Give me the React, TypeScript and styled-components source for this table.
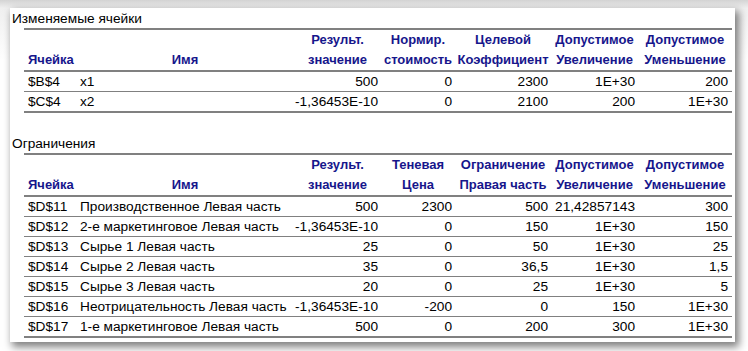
import React from "react";
import styled, { createGlobalStyle } from "styled-components";

const Global = createGlobalStyle`
  html, body { margin: 0; padding: 0; background: #ffffff; }
  body { font-family: "Liberation Sans", Arial, sans-serif; }
`;

const Canvas = styled.div`
  width: 748px;
  height: 351px;
  padding: 8px 0 0 10px;
  box-sizing: border-box;
  overflow: hidden;
  background: linear-gradient(180deg, #d4d4d4 0px, #f0f0f0 8px, #ffffff 60px);
`;

const Page = styled.div`
  width: 725px;
  height: 334px;
  background: #ffffff;
  box-shadow: 3px 4px 8px 1px rgba(0, 0, 0, 0.5);
  display: flex;
  flex-direction: column;
  font-size: 13.7px;
  color: #000;
`;

const Title = styled.div<{ $gap?: boolean }>`
  height: 20px;
  line-height: 20px;
  padding-left: 2px;
  padding-top: 1px;
  box-sizing: border-box;
  margin-top: ${(p) => (p.$gap ? "20px" : "0")};
  white-space: nowrap;
`;

const Table = styled.div`
  margin-left: 14px;
  width: 708px;
  border-top: 2px solid #808080;
`;

const cols = "52px 218px 87px 74px 96px 87px 94px";

const HeadRow = styled.div`
  display: grid;
  grid-template-columns: ${cols};
  height: 40px;
  border-bottom: 2px solid #808080;
`;

const HeadCell = styled.div<{ $align: "left" | "center" }>`
  display: flex;
  flex-direction: column;
  justify-content: flex-end;
  text-align: ${(p) => p.$align};
  padding-left: ${(p) => (p.$align === "left" ? "4px" : "0")};
  font-weight: bold;
  font-size: 13px;
  color: #16168c;
  line-height: 20px;
  white-space: nowrap;
`;

const Row = styled.div<{ $last?: boolean }>`
  display: grid;
  grid-template-columns: ${cols};
  height: 19px;
  line-height: 19px;
  border-bottom: ${(p) => (p.$last ? "2px" : "1px")} solid #808080;
`;

const Cell = styled.div<{ $num?: boolean; $pr?: number }>`
  white-space: nowrap;
  text-align: ${(p) => (p.$num ? "right" : "left")};
  padding-left: ${(p) => (p.$num ? "0" : "4px")};
  padding-right: ${(p) => (p.$num ? `${p.$pr ?? 3}px` : "0")};
`;

type Data = string[];

const changing: Data[] = [
  ["$B$4", "x1", "500", "0", "2300", "1E+30", "200"],
  ["$C$4", "x2", "-1,36453E-10", "0", "2100", "200", "1E+30"],
];

const constraints: Data[] = [
  ["$D$11", "Производственное Левая часть", "500", "2300", "500", "21,42857143", "300"],
  ["$D$12", "2-е маркетинговое Левая часть", "-1,36453E-10", "0", "150", "1E+30", "150"],
  ["$D$13", "Сырье 1 Левая часть", "25", "0", "50", "1E+30", "25"],
  ["$D$14", "Сырье 2 Левая часть", "35", "0", "36,5", "1E+30", "1,5"],
  ["$D$15", "Сырье 3 Левая часть", "20", "0", "25", "1E+30", "5"],
  ["$D$16", "Неотрицательность Левая часть", "-1,36453E-10", "-200", "0", "150", "1E+30"],
  ["$D$17", "1-е маркетинговое Левая часть", "500", "0", "200", "300", "1E+30"],
];

const Header: React.FC<{ heads: [string, string][] }> = ({ heads }) => (
  <HeadRow>
    <HeadCell $align="left">Ячейка</HeadCell>
    <HeadCell $align="center">Имя</HeadCell>
    {heads.map(([a, b], i) => (
      <HeadCell key={i} $align="center">
        <span>{a}</span>
        <span>{b}</span>
      </HeadCell>
    ))}
  </HeadRow>
);

const Body: React.FC<{ rows: Data[] }> = ({ rows }) => (
  <>
    {rows.map((r, i) => (
      <Row key={i} $last={i === rows.length - 1}>
        <Cell>{r[0]}</Cell>
        <Cell>{r[1]}</Cell>
        {r.slice(2).map((v, j) => (
          <Cell key={j} $num $pr={j === 4 ? 4 : 3}>
            {v}
          </Cell>
        ))}
      </Row>
    ))}
  </>
);

export default function App() {
  return (
    <>
      <Global />
      <Canvas>
        <Page>
          <Title>Изменяемые ячейки</Title>
          <Table>
            <Header
              heads={[
                ["Результ.", "значение"],
                ["Нормир.", "стоимость"],
                ["Целевой", "Коэффициент"],
                ["Допустимое", "Увеличение"],
                ["Допустимое", "Уменьшение"],
              ]}
            />
            <Body rows={changing} />
          </Table>
          <Title $gap>Ограничения</Title>
          <Table>
            <Header
              heads={[
                ["Результ.", "значение"],
                ["Теневая", "Цена"],
                ["Ограничение", "Правая часть"],
                ["Допустимое", "Увеличение"],
                ["Допустимое", "Уменьшение"],
              ]}
            />
            <Body rows={constraints} />
          </Table>
        </Page>
      </Canvas>
    </>
  );
}
